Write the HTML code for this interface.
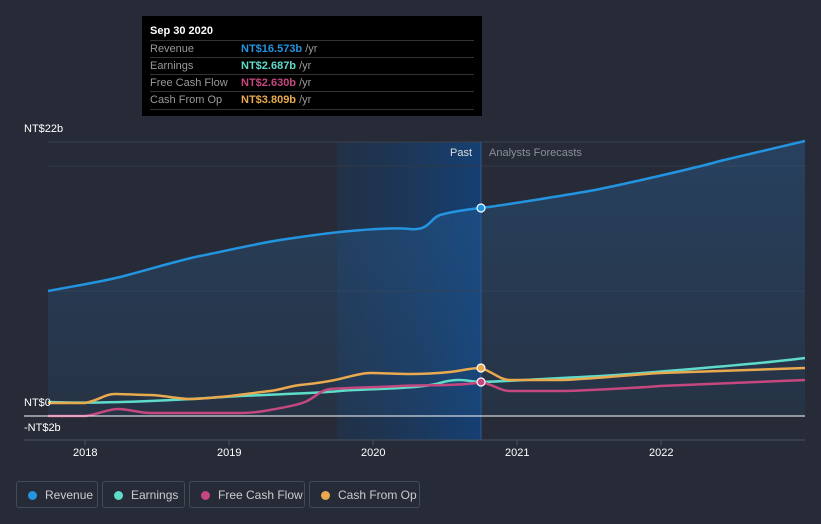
<!DOCTYPE html><html><head><style>
body{margin:0;width:821px;height:524px;background:#262b37;font-family:"Liberation Sans",sans-serif;overflow:hidden;position:relative}
.t{position:absolute;color:#fff;font-size:11px}
.tip{position:absolute;left:142px;top:16px;width:340px;height:100px;background:#000;color:#fff;font-size:11px}
.tip .r{position:absolute;left:8px;right:8px;height:17px;border-top:1px solid #333;color:#999;line-height:17px}
.tip .r span{position:absolute;left:91px}
.leg{position:absolute;top:481px;height:27px;border:1px solid #444b58;border-radius:3px;color:#ccc;font-size:12px;line-height:27px;box-sizing:border-box}
.leg i{position:absolute;left:11px;top:9px;width:9px;height:9px;border-radius:50%}
</style></head><body>
<svg width="821" height="524" style="position:absolute;left:0;top:0">
<defs>
<linearGradient id="pg" x1="0" x2="1"><stop offset="0" stop-color="#1b3a5e" stop-opacity=".4"/><stop offset="1" stop-color="#13427a" stop-opacity=".9"/></linearGradient>
<linearGradient id="rf" x1="0" y1="0" x2="0" y2="1"><stop offset="0" stop-color="#2a6aa8" stop-opacity=".35"/><stop offset="1" stop-color="#2a6aa8" stop-opacity=".12"/></linearGradient>
</defs>
<rect x="337" y="142" width="144" height="298" fill="url(#pg)"/>
<line x1="48" y1="142" x2="805" y2="142" stroke="#3a404c"/>
<line x1="48" y1="166" x2="805" y2="166" stroke="#323845"/>
<line x1="48" y1="291" x2="805" y2="291" stroke="#323845"/>
<path d="M48,291 C80,285 100,282 120,277 S180,260 200,256 S260,243 280,240 S330,233 340,232 S390,227 410,229 S430,218 440,215 S470,209 481,208 S580,193 600,189 S700,167 720,161 L805,141 L805,416 L48,416Z" fill="url(#rf)"/>
<path d="M48,291 C80,285 100,282 120,277 S180,260 200,256 S260,243 280,240 S330,233 340,232 S390,227 410,229 S430,218 440,215 S470,209 481,208 S580,193 600,189 S700,167 720,161 L805,141" fill="none" stroke="#2394df" stroke-width="2.5"/>
<path d="M48,402 C80,403 100,403 150,401 S220,397 240,396 S320,393 340,391 S420,389 440,383 S470,382 481,382 S580,377 600,376 S760,364 805,358" fill="none" stroke="#5fdcc9" stroke-width="2.5"/>
<path d="M48,416 L85,416 C100,414 108,409 118,409 S140,413 150,413 S230,413 240,413 S260,412 270,410 S295,406 305,402 S320,390 330,389 S385,387 400,386 S465,386 481,382 C495,385 500,391 510,391 S540,391 560,391 S650,387 660,386 L805,380" fill="none" stroke="#c4487f" stroke-width="2.5"/>
<path d="M48,403 L85,403 C100,400 105,394 115,394 S140,395 150,395 S180,399 190,399 S220,397 230,396 S260,392 270,391 S290,386 300,385 S325,382 335,380 S360,373 370,373 S400,374 410,374 S440,373 450,372 S470,368 481,368 C495,373 500,380 510,380 S540,380 560,380 S640,374 660,373 L805,368" fill="none" stroke="#e9a94f" stroke-width="2.5"/>
<line x1="481" y1="142" x2="481" y2="440" stroke="#2a5b95"/>
<line x1="24" y1="416" x2="805" y2="416" stroke="#fff"/>
<line x1="24" y1="440" x2="805" y2="440" stroke="#4a505c"/>
<g stroke="#4a505c"><line x1="85" y1="440" x2="85" y2="445"/><line x1="229" y1="440" x2="229" y2="445"/><line x1="373" y1="440" x2="373" y2="445"/><line x1="517" y1="440" x2="517" y2="445"/><line x1="661" y1="440" x2="661" y2="445"/></g>
<circle cx="481" cy="208" r="4" fill="#2394df" stroke="#fff" stroke-width="1.2"/>
<circle cx="481" cy="368" r="4" fill="#e9a94f" stroke="#fff" stroke-width="1.2"/>
<circle cx="481" cy="382" r="4" fill="#c4487f" stroke="#fff" stroke-width="1.2"/>
</svg>
<div class="t" style="left:24px;top:123px">NT$22b</div>
<div class="t" style="left:24px;top:397px">NT$0</div>
<div class="t" style="left:24px;top:422px">-NT$2b</div>
<div class="t" style="left:450px;top:147px;color:#ddd">Past</div>
<div class="t" style="left:489px;top:147px;color:#8a909a">Analysts Forecasts</div>
<div class="t" style="left:73px;top:447px">2018</div>
<div class="t" style="left:217px;top:447px">2019</div>
<div class="t" style="left:361px;top:447px">2020</div>
<div class="t" style="left:505px;top:447px">2021</div>
<div class="t" style="left:649px;top:447px">2022</div>
<div class="tip">
<div style="position:absolute;left:8px;top:9px;font-weight:bold">Sep 30 2020</div>
<div class="r" style="top:24px">Revenue<span><b style="color:#2394df">NT$16.573b</b> /yr</span></div>
<div class="r" style="top:41px">Earnings<span><b style="color:#5fdcc9">NT$2.687b</b> /yr</span></div>
<div class="r" style="top:58px">Free Cash Flow<span><b style="color:#c4487f">NT$2.630b</b> /yr</span></div>
<div class="r" style="top:75px;border-bottom:1px solid #333">Cash From Op<span><b style="color:#e9a94f">NT$3.809b</b> /yr</span></div>
</div>
<div class="leg" style="left:16px;width:82px"><i style="background:#2394df"></i><span style="margin-left:28px">Revenue</span></div>
<div class="leg" style="left:102px;width:83px"><i style="background:#5fdcc9"></i><span style="margin-left:28px">Earnings</span></div>
<div class="leg" style="left:189px;width:116px"><i style="background:#c4487f"></i><span style="margin-left:28px">Free Cash Flow</span></div>
<div class="leg" style="left:309px;width:111px"><i style="background:#e9a94f"></i><span style="margin-left:28px">Cash From Op</span></div>
</body></html>
